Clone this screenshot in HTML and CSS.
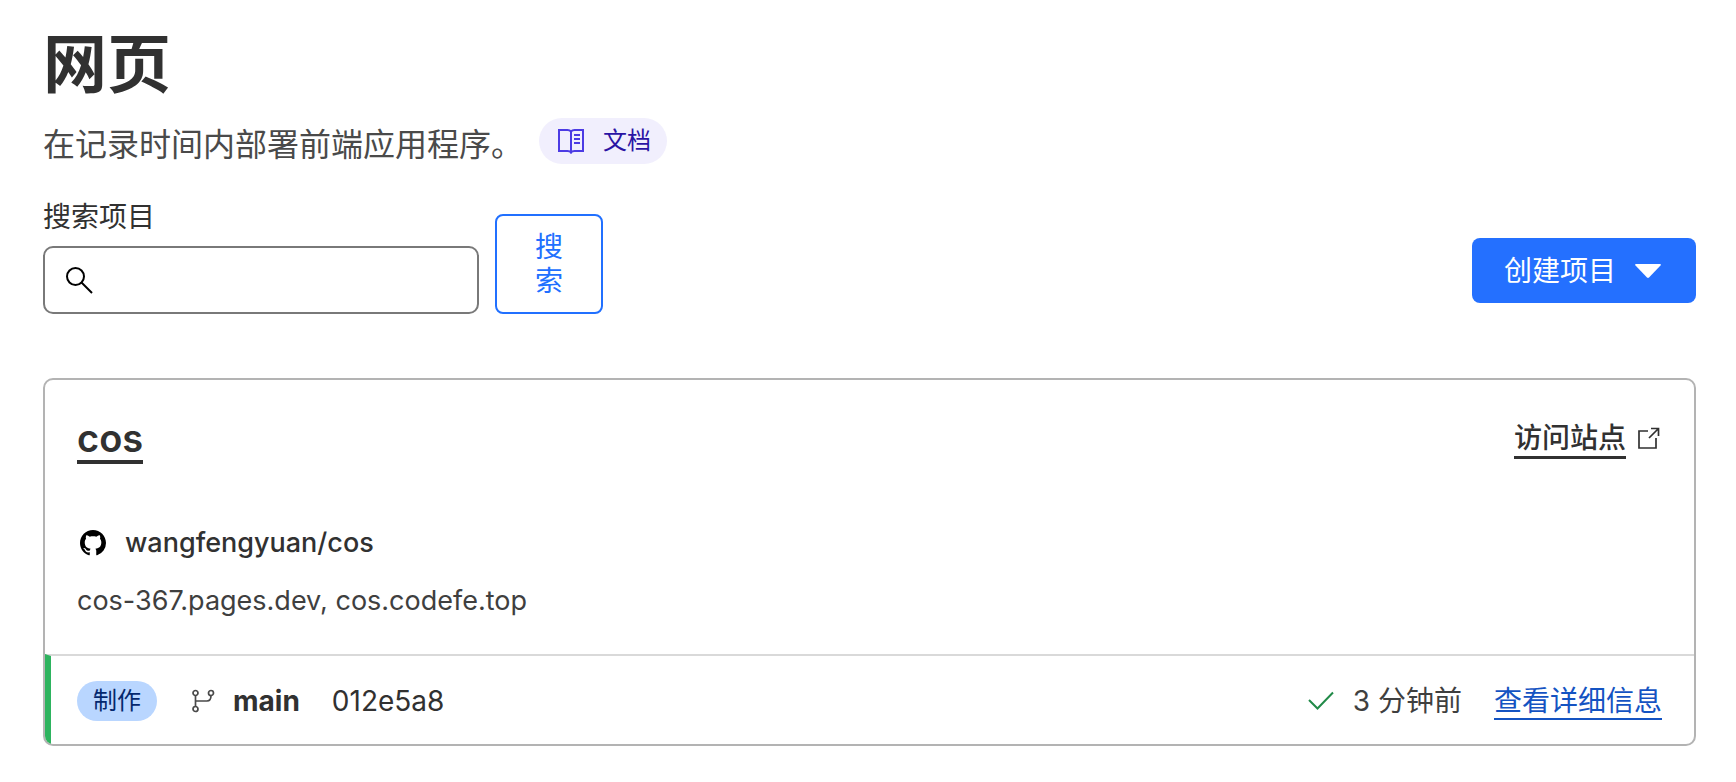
FILE: index.html
```html
<!DOCTYPE html>
<html lang="zh-CN">
<head>
<meta charset="utf-8">
<title>网页</title>
<link rel="stylesheet" href="styles.css">
</head>
<body>
<main class="page">
  <header class="intro">
    <h1 class="title">网页</h1>
    <div class="summary">
      <p class="lead">在记录时间内部署前端应用程序。</p>
      <a class="docs" href="#">
        <svg class="docs-icon" width="26" height="26" viewBox="0 0 26 26" fill="none" stroke="currentColor" stroke-width="2" aria-hidden="true">
          <path d="M13 3.5C12 2.300 11 2 9.500 2H1V23H9.500C11.500 23 12.500 23.500 13 24.500C13.500 23.500 14.500 23 16.500 23H25V2H16.500C15 2 14 2.300 13 3.500V25"/>
          <path d="M16 7H22M16 11H22M16 15H22"/>
        </svg>
        <span>文档</span>
      </a>
    </div>
  </header>

  <div class="toolbar">
    <form class="search">
      <div class="field">
        <label class="label" for="project">搜索项目</label>
        <div class="box">
          <svg width="28" height="28" viewBox="0 0 28 28" fill="none" stroke="currentColor" stroke-width="2" aria-hidden="true">
            <circle cx="10.500" cy="10.500" r="8.500"/><path d="M16.500 16.500L27 27"/>
          </svg>
          <input class="input" id="project" type="text">
        </div>
      </div>
      <button class="search-button" type="button">搜<br>索</button>
    </form>
    <button class="create" type="button">
      <span>创建项目</span>
      <svg width="26" height="14" viewBox="0 0 26 14" fill="currentColor" aria-hidden="true"><path d="M1 0H25Q26.500 .3 25.500 1.500L14 13.500Q13 14.300 12 13.500L.5 1.500Q-.5 .3 1 0Z"/></svg>
    </button>
  </div>

  <article class="card">
    <div class="card-body">
      <div class="card-head">
        <h2 class="name"><a class="name-link" href="#">cos</a></h2>
        <a class="visit" href="#">
          <span class="visit-text">访问站点</span>
          <svg width="22" height="22" viewBox="0 0 22 22" fill="none" stroke="currentColor" stroke-width="1.700" aria-hidden="true">
            <path d="M10 4H1V21H18V11M13 1.500H20.500V9M20.500 1.500L11 11"/>
          </svg>
        </a>
      </div>
      <div class="repo">
        <svg class="repo-icon" width="26" height="26" viewBox="0 0 16 16" fill="#000" aria-hidden="true"><path d="M8 0C3.580 0 0 3.580 0 8c0 3.540 2.290 6.530 5.470 7.590.4.070.55-.17.55-.38 0-.19-.01-.82-.01-1.490-2.010.37-2.530-.49-2.690-.94-.09-.23-.48-.94-.82-1.130-.28-.15-.68-.52-.01-.53.63-.01 1.080.58 1.230.82.72 1.210 1.870.87 2.330.66.07-.52.28-.87.51-1.070-1.780-.2-3.640-.89-3.640-3.950 0-.87.31-1.590.82-2.150-.08-.2-.36-1.020.08-2.120 0 0 .67-.21 2.200.82.64-.18 1.320-.27 2-.27s1.360.09 2 .27c1.530-1.040 2.200-.82 2.200-.82.44 1.100.16 1.920.08 2.120.51.56.82 1.270.82 2.150 0 3.070-1.870 3.750-3.650 3.950.29.25.54.73.54 1.480 0 1.070-.01 1.930-.01 2.200 0 .21.15.46.55.38A8.010 8.010 0 0 0 16 8c0-4.420-3.580-8-8-8z"/></svg>
        <span>wangfengyuan/cos</span>
      </div>
      <p class="domains">cos-367.pages.dev, cos.codefe.top</p>
    </div>
    <footer class="deploy">
      <div class="source">
        <span class="tag">制作</span>
        <svg class="branch-icon" width="24" height="24" viewBox="0 0 24 24" fill="none" stroke="currentColor" stroke-width="1.700" aria-hidden="true">
          <circle cx="4.500" cy="4" r="2.500"/><circle cx="20" cy="4" r="2.500"/><circle cx="4.500" cy="20" r="2.500"/>
          <path d="M4.500 6.500V17.500M4.500 12H16Q20 12 20 6.500"/>
        </svg>
        <strong class="branch">main</strong>
        <span>012e5a8</span>
      </div>
      <div class="status">
        <svg class="check" width="28" height="20" viewBox="0 0 28 20" fill="none" stroke="currentColor" stroke-width="2" aria-hidden="true"><path d="M2 9L10.500 17.500L26 1.500"/></svg>
        <span class="time">3 分钟前</span>
        <a class="details" href="#">查看详细信息</a>
      </div>
    </footer>
  </article>
</main>
</body>
</html>
```
FILE: styles.css
```css
* {
  box-sizing: border-box;
}

body {
  margin: 0;
  background: #fff;
  color: #313131;
  font: 28px/34px Inter, "Noto Sans CJK SC", sans-serif;
}

h1, h2, p {
  margin: 0;
}

a {
  color: inherit;
  text-decoration: none;
}

svg {
  display: block;
  flex: none;
}

button {
  font: inherit;
  cursor: pointer;
}

.page {
  padding: 24px 40px 32px 43px;
}

.title {
  font-size: 64px;
  line-height: 80px;
  font-weight: 600;
}

.summary {
  display: flex;
  align-items: flex-start;
  gap: 16px;
  padding-top: 14px;
}

.lead {
  padding-top: 5px;
  font-size: 32px;
  line-height: 44px;
  color: #4a4a4a;
}

.docs {
  display: flex;
  align-items: center;
  gap: 19px;
  padding: 6px 16px 6px 19px;
  border-radius: 23px;
  background: #f1effd;
  color: #2a14a4;
  font-size: 24px;
}

.docs-icon {
  color: #4c3be4;
}

.toolbar {
  display: flex;
  align-items: flex-end;
  justify-content: space-between;
  padding-top: 33px;
}

.search {
  display: flex;
  align-items: flex-end;
  gap: 16px;
}

.field {
  display: flex;
  flex-direction: column;
  gap: 12px;
}

.box {
  display: flex;
  align-items: center;
  gap: 12px;
  width: 436px;
  height: 68px;
  padding: 0 20px;
  border: 2px solid #797979;
  border-radius: 10px;
  color: #000;
}

.input {
  flex: 1;
  min-width: 0;
  border: 0;
  outline: 0;
  background: none;
  font: inherit;
}

.search-button {
  padding: 14px 38px;
  border: 2px solid #2170ff;
  border-radius: 8px;
  background: #fff;
  color: #2170ff;
}

.create {
  display: flex;
  align-items: center;
  gap: 19px;
  margin-bottom: 11px;
  padding: 16px 35px 15px 32px;
  border: 0;
  border-radius: 8px;
  background: #2470ff;
  color: #fff;
}

.card {
  margin-top: 64px;
  overflow: hidden;
  border: 2px solid #b3b3b3;
  border-radius: 10px;
}

.card-body {
  padding: 36px 32px;
}

.card-head {
  display: flex;
  align-items: flex-start;
  justify-content: space-between;
}

.name {
  font-size: 38px;
  line-height: 44px;
  font-weight: 600;
}

.name-link {
  display: block;
  border-bottom: 4px solid #313131;
}

.visit {
  display: flex;
  align-items: center;
  gap: 12px;
  padding-right: 2px;
  font-weight: 500;
}

.visit-text {
  padding: 5px 0 1px;
  border-bottom: 3px solid #313131;
}

.repo {
  display: flex;
  align-items: center;
  gap: 19px;
  padding: 62px 0 0 3px;
  font-size: 27px;
  font-weight: 500;
}

.domains {
  padding-top: 24px;
  font-size: 27px;
  color: #3f3f3f;
}

.deploy {
  display: flex;
  align-items: center;
  justify-content: space-between;
  padding: 25px 32px 23px 26px;
  border-top: 2px solid #d9d9d9;
  border-left: 6px solid #2db35e;
}

.source, .status {
  display: flex;
  align-items: center;
}

.tag {
  margin-right: 34px;
  padding: 3px 16px;
  border-radius: 20px;
  background: #b9d6ff;
  color: #04286e;
  font-size: 24px;
}

.branch-icon {
  margin-right: 18px;
  color: #4a4a4a;
}

.branch {
  margin-right: 32px;
  font-weight: 700;
}

.check {
  margin-right: 18px;
  color: #218a48;
}

.time {
  margin-right: 32px;
  color: #3f3f3f;
}

.details {
  padding-top: 2px;
  border-bottom: 2px solid #1453c2;
  color: #1453c2;
}
```
